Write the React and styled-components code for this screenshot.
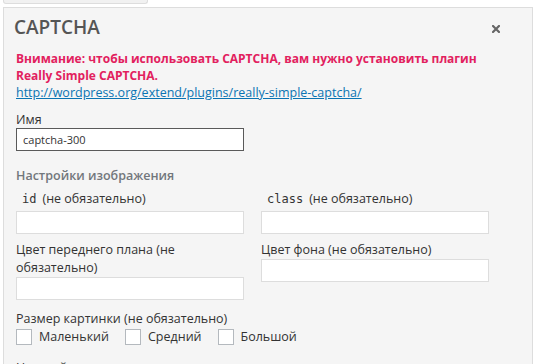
import React from 'react';
import styled, { createGlobalStyle } from 'styled-components';

const GlobalStyle = createGlobalStyle`
  html, body {
    margin: 0;
    padding: 0;
    background: #fff;
    font-family: "Open Sans", "Liberation Sans", sans-serif;
    color: #333;
    overflow: hidden;
  }
`;

const Tab = styled.div`
  width: 143px;
  height: 3px;
  margin-left: 3px;
  background: #f1f1f1;
  border: 1px solid #ddd;
  border-top: none;
  border-radius: 0 0 3px 3px;
`;

const Panel = styled.div`
  box-sizing: border-box;
  width: 530px;
  height: 420px;
  margin: 3px 0 0 3px;
  background: #f5f5f5;
  border: 1px solid #ddd;
  padding: 6px 8px 0 12px;
`;

const Header = styled.div`
  display: flex;
  align-items: center;
  justify-content: space-between;
  padding-right: 24px;
`;

const Title = styled.h2`
  margin: 0 0 0 -2px;
  font-size: 19px;
  line-height: 27px;
  font-weight: 600;
  color: #555;
`;

const Close = styled.svg`
  width: 8px;
  height: 8px;
  margin-top: 3px;
`;

const Warning = styled.div`
  margin-top: 9px;
  padding-right: 20px;
  font-size: 12px;
  line-height: 17px;
  font-weight: 700;
  color: #e2215e;
`;

const Link = styled.a`
  display: block;
  font-size: 12.5px;
  line-height: 17px;
  color: #0a74b3;
  text-decoration: underline;
`;

const Label = styled.div`
  font-size: 12.5px;
  line-height: ${(p) => p.$lh || 17}px;
  color: #333;
  margin-top: ${(p) => p.$top || 0}px;
`;

const Input = styled.input`
  box-sizing: border-box;
  display: block;
  width: 228px;
  height: 23px;
  margin: ${(p) => p.$top || 0}px 0 0 0;
  padding: 0 6px;
  background: #fff;
  border: 1px solid ${(p) => (p.$focus ? '#5a5a5a' : '#ddd')};
  font-family: "Open Sans", "Liberation Sans", sans-serif;
  font-size: 11px;
  color: #333;
  outline: none;
`;

const Section = styled.div`
  margin-top: 16px;
  font-size: 12.5px;
  line-height: 18px;
  font-weight: 600;
  color: #72777c;
`;

const Grid = styled.div`
  display: grid;
  grid-template-columns: 228px 228px;
  column-gap: 17px;
  align-items: start;
  margin-top: ${(p) => p.$top || 0}px;
`;

const Field = styled.div`
  display: flex;
  flex-direction: column;
`;

const Code = styled.code`
  font-family: "DejaVu Sans Mono", "Liberation Mono", monospace;
  font-size: 12px;
  line-height: 1;
  color: #333;
  padding: 0 6px 0 6px;
`;

const Checks = styled.div`
  display: flex;
  align-items: center;
  margin-top: 1px;
`;

const Check = styled.label`
  display: flex;
  align-items: center;
  gap: 7px;
  margin-right: 16px;
  font-size: 12.5px;
  line-height: 16px;
  color: #333;
`;

const Box = styled.span`
  box-sizing: border-box;
  width: 16px;
  height: 16px;
  background: #fff;
  border: 1px solid #b4b9be;
`;

export default function App() {
  return (
    <>
      <GlobalStyle />
      <Tab />
      <Panel>
        <Header>
          <Title>CAPTCHA</Title>
          <Close viewBox="0 0 8 8">
            <path d="M1 1L7 7M7 1L1 7" stroke="#666" strokeWidth="2.2" strokeLinecap="square" />
          </Close>
        </Header>
        <Warning>
          Внимание: чтобы использовать CAPTCHA, вам нужно установить плагин Really Simple CAPTCHA.
        </Warning>
        <Link href="#">http://wordpress.org/extend/plugins/really-simple-captcha/</Link>
        <Label $top={10}>Имя</Label>
        <Input $focus defaultValue="captcha-300" />
        <Section>Настройки изображения</Section>
        <Grid $top={5}>
          <Field>
            <Label>
              <Code>id</Code>(не обязательно)
            </Label>
            <Input $top={4} />
          </Field>
          <Field>
            <Label>
              <Code>class</Code>(не обязательно)
            </Label>
            <Input $top={4} />
          </Field>
        </Grid>
        <Grid $top={7}>
          <Field>
            <Label $lh={18}>Цвет переднего плана (не обязательно)</Label>
            <Input $top={0} />
          </Field>
          <Field>
            <Label $lh={18}>Цвет фона (не обязательно)</Label>
            <Input $top={0} />
          </Field>
        </Grid>
        <Label $lh={18} $top={10}>Размер картинки (не обязательно)</Label>
        <Checks>
          <Check><Box />Маленький</Check>
          <Check><Box />Средний</Check>
          <Check><Box />Большой</Check>
        </Checks>
        <Label $lh={18} $top={14}>Настройки вывода</Label>
      </Panel>
    </>
  );
}
